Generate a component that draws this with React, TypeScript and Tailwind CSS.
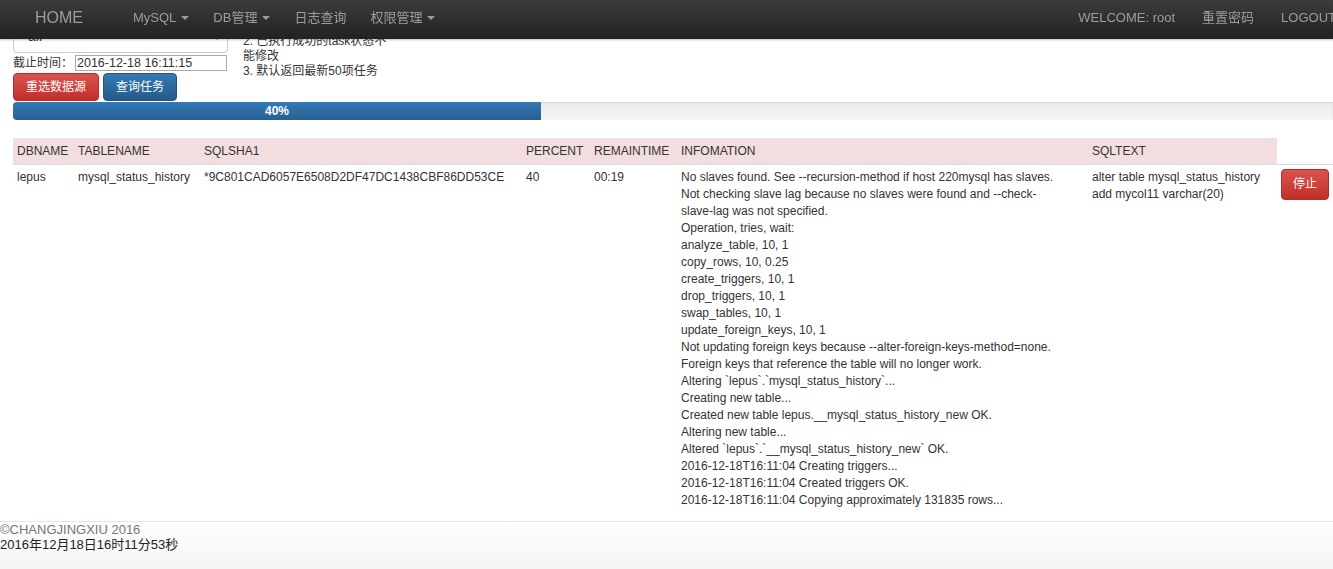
const navLeft = [
  { label: 'MySQL', caret: true },
  { label: 'DB管理', caret: true },
  { label: '日志查询', caret: false },
  { label: '权限管理', caret: true },
];

const navRight = ['WELCOME: root', '重置密码', 'LOGOUT'];

const columns = [
  { title: 'DBNAME', width: 'w-[61px]' },
  { title: 'TABLENAME', width: 'w-[126px]' },
  { title: 'SQLSHA1', width: 'w-[322px]' },
  { title: 'PERCENT', width: 'w-[68px]' },
  { title: 'REMAINTIME', width: 'w-[87px]' },
  { title: 'INFOMATION', width: 'w-[411px]' },
  { title: 'SQLTEXT', width: 'w-[189px]' },
];

const infoLines = [
  'No slaves found. See --recursion-method if host 220mysql has slaves.',
  'Not checking slave lag because no slaves were found and --check-',
  'slave-lag was not specified.',
  'Operation, tries, wait:',
  'analyze_table, 10, 1',
  'copy_rows, 10, 0.25',
  'create_triggers, 10, 1',
  'drop_triggers, 10, 1',
  'swap_tables, 10, 1',
  'update_foreign_keys, 10, 1',
  'Not updating foreign keys because --alter-foreign-keys-method=none.',
  'Foreign keys that reference the table will no longer work.',
  'Altering `lepus`.`mysql_status_history`...',
  'Creating new table...',
  'Created new table lepus.__mysql_status_history_new OK.',
  'Altering new table...',
  'Altered `lepus`.`__mysql_status_history_new` OK.',
  '2016-12-18T16:11:04 Creating triggers...',
  '2016-12-18T16:11:04 Created triggers OK.',
  '2016-12-18T16:11:04 Copying approximately 131835 rows...',
];

function Caret() {
  return <span className="ml-[5px] inline-block h-0 w-0 border-x-[4px] border-t-[4px] border-x-transparent border-t-[#9d9d9d] align-middle" />;
}

export default function App() {
  return (
    <div className="relative min-h-[569px] bg-white font-['Liberation_Sans','Noto_Sans_CJK_SC',sans-serif] text-[12px] leading-[17px] text-[#333]">
      <nav className="fixed inset-x-0 top-0 z-10 flex h-[39px] items-center bg-gradient-to-b from-[#3c3c3c] to-[#222] pb-[5px] text-[13px] text-[#9d9d9d] shadow-[0_1px_2px_rgba(0,0,0,0.25)]">
        <span className="ml-[35px] text-[16px]">HOME</span>
        <ul className="ml-[38px] flex">
          {navLeft.map((item) => (
            <li key={item.label} className="px-[12px]">
              {item.label}
              {item.caret && <Caret />}
            </li>
          ))}
        </ul>
        <ul className="ml-auto mr-[-3px] flex gap-[27px]">
          {navRight.map((item) => (
            <li key={item} className="whitespace-nowrap">{item}</li>
          ))}
        </ul>
      </nav>

      <main className="pl-[13px]">
        <div className="flex">
          <div className="w-[215px] pt-[19px]">
            <div className="relative flex h-[34px] items-center rounded-[4px] border border-[#ccc] pl-[14px] text-[14px] shadow-[inset_0_1px_1px_rgba(0,0,0,0.075)]">
              all
              <span className="absolute right-[7px] top-[17px] h-0 w-0 border-x-[3px] border-t-[3px] border-x-transparent border-t-[#888]" />
            </div>
            <div className="mt-[2px] flex h-[16px] items-center">
              <span className="w-[62px]">截止时间：</span>
              <span className="flex h-[16px] w-[152px] items-center border border-[#a9a9a9] pl-[1px] text-[12.5px] leading-[14px]">2016-12-18 16:11:15</span>
            </div>
            <div className="mt-[2px] flex gap-[4px] text-white">
              <button className="rounded-[4px] border border-[#b92c28] bg-gradient-to-b from-[#d9534f] to-[#c12e2a] px-[12px] py-[5px] leading-[16px]">重选数据源</button>
              <button className="rounded-[4px] border border-[#245580] bg-gradient-to-b from-[#337ab7] to-[#265a88] px-[12px] py-[5px] leading-[16px]">查询任务</button>
            </div>
          </div>
          <div className="ml-[15px] w-[150px] pt-[34px] leading-[15px]">
            <p>2. 已执行成功的task状态不能修改</p>
            <p>3. 默认返回最新50项任务</p>
          </div>
        </div>

        <div className="mb-[18px] mt-[1px] flex h-[18px] overflow-hidden rounded-l-[4px] bg-gradient-to-b from-[#ebebeb] to-[#f5f5f5] shadow-[inset_0_1px_2px_rgba(0,0,0,0.1)]">
          <div className="flex w-[40%] items-center justify-center bg-gradient-to-b from-[#337ab7] to-[#286090] text-[12px] font-bold leading-[18px] text-white">
            40%
          </div>
        </div>

        <table className="mb-[8px] w-[1320px] table-fixed border-collapse text-left">
          <thead>
            <tr>
              {columns.map((col) => (
                <th key={col.title} className={`${col.width} bg-[#f2dede] px-[4px] pb-[4px] pt-[5px] font-normal`}>
                  {col.title}
                </th>
              ))}
              <th className="w-[56px]" />
            </tr>
          </thead>
          <tbody>
            <tr className="border-t border-[#ddd] align-top">
              <td className="p-[4px]">lepus</td>
              <td className="p-[4px]">mysql_status_history</td>
              <td className="p-[4px]">*9C801CAD6057E6508D2DF47DC1438CBF86DD53CE</td>
              <td className="p-[4px]">40</td>
              <td className="p-[4px]">00:19</td>
              <td className="p-[4px]">
                {infoLines.map((line) => (
                  <div key={line}>{line}</div>
                ))}
              </td>
              <td className="p-[4px]">alter table mysql_status_history add mycol11 varchar(20)</td>
              <td className="p-[4px]">
                <button className="h-[31px] w-[48px] rounded-[4px] border border-[#b92c28] bg-gradient-to-b from-[#d9534f] to-[#c12e2a] text-[12px] text-white">停止</button>
              </td>
            </tr>
          </tbody>
        </table>
      </main>

      <footer className="h-[49px] border-t border-[#e5e5e5] bg-gradient-to-b from-[#fefefe] to-[#f4f4f4] text-[13px] leading-[15px]">
        <p className="text-[#777]">©CHANGJINGXIU 2016</p>
        <p className="text-[#222]">2016年12月18日16时11分53秒</p>
      </footer>
    </div>
  );
}
